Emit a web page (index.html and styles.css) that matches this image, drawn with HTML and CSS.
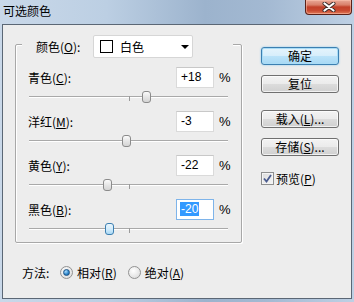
FILE: index.html
```html
<!DOCTYPE html>
<html lang="zh-CN">
<head>
  <meta charset="UTF-8">
  <title>可选颜色</title>
  <link rel="stylesheet" href="styles.css">
</head>
<body>

<div class="window">
  <div class="titlebar">
    <span class="title">可选颜色</span>
    <div class="close">
      <svg width="14" height="10" viewBox="0 0 14 10">
        <path d="M2.5 1.5 L11.5 8.5 M11.5 1.5 L2.5 8.5" stroke="#3a2a28" stroke-width="4" stroke-linecap="round"/>
        <path d="M2.5 1.5 L11.5 8.5 M11.5 1.5 L2.5 8.5" stroke="#fff" stroke-width="2.2" stroke-linecap="round"/>
      </svg>
    </div>
  </div>

  <div class="client">
    <div class="main">
      <div class="group">
        <div class="group-head">
          <span class="head-label">颜色(<u>O</u>):</span>
          <div class="combo">
            <span class="swatch"></span>
            <span class="combo-text">白色</span>
            <span class="arrow"></span>
          </div>
        </div>

        <!-- one block per ink -->
        <div class="ink">
          <div class="row">
            <span class="row-label">青色(<u>C</u>):</span>
            <div class="field">+18</div>
            <span class="pct">%</span>
          </div>
          <div class="slider">
            <div class="track"></div>
            <span class="tick"></span>
            <span class="thumb" style="left: calc(59% - 4px)"></span>
          </div>
        </div>

        <div class="ink">
          <div class="row">
            <span class="row-label">洋红(<u>M</u>):</span>
            <div class="field">-3</div>
            <span class="pct">%</span>
          </div>
          <div class="slider">
            <div class="track"></div>
            <span class="tick"></span>
            <span class="thumb" style="left: calc(48.5% - 4px)"></span>
          </div>
        </div>

        <div class="ink">
          <div class="row">
            <span class="row-label">黄色(<u>Y</u>):</span>
            <div class="field">-22</div>
            <span class="pct">%</span>
          </div>
          <div class="slider">
            <div class="track"></div>
            <span class="tick"></span>
            <span class="thumb" style="left: calc(39% - 4px)"></span>
          </div>
        </div>

        <div class="ink">
          <div class="row">
            <span class="row-label">黑色(<u>B</u>):</span>
            <div class="field focused"><span class="sel">-20</span></div>
            <span class="pct">%</span>
          </div>
          <div class="slider">
            <div class="track"></div>
            <span class="tick"></span>
            <span class="thumb hot" style="left: calc(40% - 4px)"></span>
          </div>
        </div>
      </div>

      <div class="method">
        <span class="method-label">方法:</span>
        <span class="radio checked"></span>
        <span class="radio-text">相对(<u>R</u>)</span>
        <span class="radio second"></span>
        <span class="radio-text">绝对(<u>A</u>)</span>
      </div>
    </div>

    <div class="side">
      <div class="btn default">确定</div>
      <div class="btn">复位</div>
      <div class="btn far">载入(<u>L</u>)...</div>
      <div class="btn">存储(<u>S</u>)...</div>
      <div class="check-row">
        <span class="checkbox">
          <svg width="9" height="9" viewBox="0 0 9 9"><path d="M1 4.5 L3.5 7.5 L8 1" fill="none" stroke="#4b5c8f" stroke-width="1.8"/></svg>
        </span>
        <span>预览(<u>P</u>)</span>
      </div>
    </div>
  </div>
</div>

</body>
</html>
```

FILE: styles.css
```css
body { margin: 0; font-family: "Noto Sans CJK SC", "Liberation Sans", sans-serif; font-size: 12px; color: #000; }
u { text-decoration: underline; text-underline-offset: 1px; }

.window {
  width: 354px;
  height: 302px;
  display: flex;
  flex-direction: column;
  background: linear-gradient(90deg, #c9d8e9 0%, #bccfe3 30%, #9cb3cd 58%, #a3b9d2 75%, #bed0e4 100%);
}

/* title bar */
.titlebar { height: 24px; display: flex; justify-content: space-between; }
.title { padding: 3px 0 0 3px; line-height: 16px; font-size: 12px; }
.close {
  width: 47px;
  height: 15px;
  margin-right: 2px;
  box-sizing: border-box;
  border: 1px solid #5a2118;
  border-top: none;
  border-radius: 0 0 4px 4px;
  background: linear-gradient(#e9a898 0%, #d9806b 35%, #c2402a 50%, #c94a31 75%, #e07a58 100%);
  box-shadow: inset 0 0 0 1px rgba(255, 200, 180, 0.5);
  display: flex;
  align-items: center;
  justify-content: center;
}

/* client area */
.client {
  margin: 0 2px;
  height: 275px;
  box-sizing: border-box;
  border: 1px solid #5b6775;
  background: #ededed;
  display: flex;
}
.main { padding: 19px 0 0 12px; }
.side { margin-left: auto; width: 78px; padding: 22px 12px 0 0; display: flex; flex-direction: column; }

/* group box */
.group {
  width: 227px;
  box-sizing: border-box;
  border: 1px solid #a8a8a8;
  border-radius: 2px;
  box-shadow: inset 1px 1px 0 #fff, 1px 1px 0 #fff;
  padding-bottom: 8px;
}
.group-head {
  display: flex;
  align-items: center;
  width: 211px;
  height: 23px;
  margin: -10px 0 0 6px;
  background: #ededed;
}
.head-label { width: 57px; padding-left: 14px; }
.combo {
  width: 100px;
  height: 23px;
  box-sizing: border-box;
  border: 1px solid #d6d6d6;
  border-radius: 2px;
  background: #fff;
  display: flex;
  align-items: center;
  padding-left: 6px;
}
.swatch { width: 13px; height: 13px; box-sizing: border-box; border: 1px solid #000; background: #fff; }
.combo-text { margin-left: 7px; }
.arrow {
  margin-left: auto;
  margin-right: 3px;
  width: 0;
  height: 0;
  border-left: 4px solid transparent;
  border-right: 4px solid transparent;
  border-top: 4px solid #000;
}

/* ink rows */
.ink { margin-top: 9px; }
.row { display: flex; align-items: center; height: 21px; padding-left: 12px; }
.row-label { flex: 1; }
.field {
  width: 38px;
  height: 21px;
  box-sizing: border-box;
  border: 1px solid #dadada;
  border-top-color: #c8c8c8;
  background: #fff;
  padding-left: 4px;
  font-family: "Liberation Sans", sans-serif;
  font-size: 12px;
  line-height: 19px;
}
.field.focused { border-color: #7eb4ea; padding-left: 3px; }
.sel { background: #3399ff; color: #fff; padding: 0 1px; }
.pct { width: 27px; box-sizing: border-box; padding-left: 5px; font-family: "Liberation Sans", sans-serif; font-size: 13px; }

.slider { position: relative; height: 14px; margin: 0 13px; padding-top: 8px; box-sizing: border-box; }
.track { height: 1px; background: #a9a9a9; border-bottom: 1px solid #fff; }
.tick { position: absolute; left: 50%; top: 8px; width: 1px; height: 5px; background: #9a9a9a; }
.thumb {
  position: absolute;
  top: 3px;
  width: 9px;
  height: 12px;
  box-sizing: border-box;
  border: 1px solid #8b8b8b;
  border-radius: 3px;
  background: linear-gradient(#fbfbfb, #e6e6e6 50%, #d4d4d4);
}
.thumb.hot { border-color: #3c7fb1; background: linear-gradient(#eaf6fd, #d3ecfb 50%, #a9d9f6); }

/* method */
.method { display: flex; align-items: center; height: 16px; margin-top: 21px; padding-left: 7px; }
.method-label { width: 38px; }
.radio {
  width: 13px;
  height: 13px;
  box-sizing: border-box;
  border: 1px solid #929292;
  border-radius: 50%;
  background: radial-gradient(circle at 40% 35%, #fff, #e2e2e2 70%, #cfcfcf);
  margin-right: 4px;
  display: flex;
  align-items: center;
  justify-content: center;
}
.radio.checked::after {
  content: "";
  width: 7px;
  height: 7px;
  border-radius: 50%;
  border: 1px solid #1d5385;
  box-sizing: border-box;
  background: radial-gradient(circle at 35% 30%, #a8dcff, #2a83c8 60%, #13558f);
}
.radio.second { margin-left: 11px; }

/* buttons */
.btn {
  height: 18px;
  box-sizing: border-box;
  border: 1px solid #707070;
  border-radius: 3px;
  background: linear-gradient(#f3f3f3 0%, #ebebeb 48%, #dcdcdc 52%, #d0d0d0 100%);
  box-shadow: inset 0 0 0 1px rgba(255, 255, 255, 0.7);
  text-align: center;
  line-height: 16px;
  margin-bottom: 10px;
}
.btn.default {
  border-color: #3c7fb1;
  background: linear-gradient(#e5f4fc 0%, #d7eefb 48%, #bbe3f9 52%, #a8d8f4 100%);
  box-shadow: inset 0 0 0 1px #a9dcf6, 0 0 2px #7fc6ee;
}
.btn.far { margin-top: 7px; }
.check-row { display: flex; align-items: center; height: 13px; margin-top: 6px; gap: 2px; }
.checkbox {
  width: 13px;
  height: 13px;
  box-sizing: border-box;
  border: 1px solid #8e8f8f;
  background: linear-gradient(135deg, #dcdcdc, #f6f6f6);
  box-shadow: inset 0 0 0 1px #f4f4f4;
  display: flex;
  align-items: center;
  justify-content: center;
}
```
